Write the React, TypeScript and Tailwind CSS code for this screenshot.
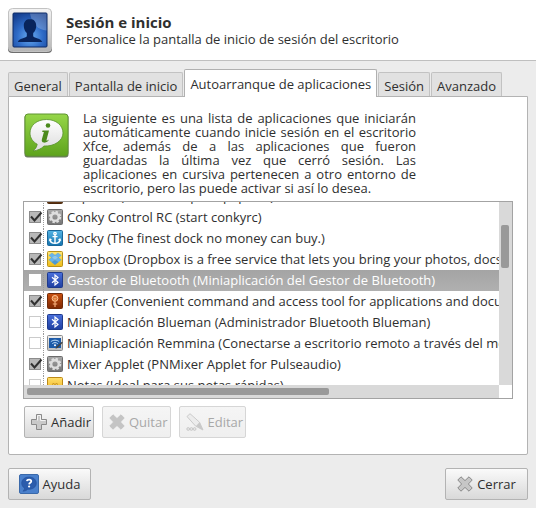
import {useState, type ReactNode} from "react";

type AppEntry = {
    name: string;
    icon: ReactNode;
    enabled: boolean;
};

type TileProps = {
    top: string;
    bottom: string;
    edge: string;
    children: ReactNode;
};

function Tile({top, bottom, edge, children}: TileProps) {
    const id = `tile${top.slice(1)}`;
    return (
        <svg viewBox="0 0 16 16" className="size-4 shrink-0">
            <defs>
                <linearGradient id={id} x1="0" y1="0" x2="0" y2="1">
                    <stop offset="0" stopColor={top}/>
                    <stop offset="1" stopColor={bottom}/>
                </linearGradient>
            </defs>
            <rect x="0.5" y="0.5" width="15" height="15" rx="1" fill={`url(#${id})`} stroke={edge}/>
            {children}
        </svg>
    );
}

const gear = (
    <Tile top="#a9a9a9" bottom="#757575" edge="#6c6c6c">
        <circle cx="8" cy="8" r="5.2" fill="none" stroke="#dedede" strokeWidth="2" strokeDasharray="2.4 1.68"/>
        <circle cx="8" cy="8" r="3.8" fill="none" stroke="#dedede" strokeWidth="2.4"/>
    </Tile>
);

const anchor = (
    <Tile top="#55b4e4" bottom="#1573ae" edge="#1a6799">
        <g fill="none" stroke="#fff" strokeWidth="1.4">
            <circle cx="8" cy="3.6" r="1.2"/>
            <path d="M8 5v8M5.5 6.6h5M2.9 9.3c.3 2.5 2.4 4 5.1 4s4.8-1.5 5.1-4"/>
        </g>
        <path d="M1.8 11l1-3 2.4 2zM14.2 11l-1-3-2.4 2z" fill="#fff"/>
    </Tile>
);

const dropbox = (
    <Tile top="#ffe878" bottom="#eebc19" edge="#b99218">
        <path d="M5 2L8.200 4.400 5 6.800 1.800 4.400zM11 2l3.200 2.400L11 6.800 7.800 4.400zM5 6.400l3.200 2.400L5 11.200 1.800 8.800zM11 6.400l3.200 2.400-3.200 2.400-3.200-2.400z" fill="#67b4ec" stroke="#4d9cd8" strokeWidth=".4"/>
        <path d="M8 4.400l3 2.200-3 2.200-3-2.200z" fill="#8cc8f2"/>
        <path d="M4.600 11.300L8 9l3.400 2.300L8 13.900z" fill="#4a98d6"/>
    </Tile>
);

const bluetooth = (
    <Tile top="#4a70dc" bottom="#1f3fa0" edge="#1e3a8c">
        <path d="M5 5.3l6 5.2L8 13V3l3 2.5-6 5.2" fill="none" stroke="#fff" strokeWidth="1.2"/>
    </Tile>
);

const kupfer = (
    <Tile top="#c9500f" bottom="#7e2803" edge="#6f2a09">
        <circle cx="8" cy="5.4" r="2.9" fill="#d8702c" stroke="#ffc595" strokeWidth="1"/>
        <path d="M8 8.4V14M5.8 11h4.4" stroke="#f5ad78" strokeWidth="1.2"/>
        <path d="M6.5 4.8L8 6.4l1.5-1.6" fill="none" stroke="#ffc595" strokeWidth=".8"/>
    </Tile>
);

const remmina = (
    <Tile top="#f0f0f0" bottom="#bdbdbd" edge="#8a8a8a">
        <path d="M2 3h12v10H2z" fill="#1c5aa8"/>
        <path d="M3.8 6.7c2.4-2 6-2 8.4 0M5.3 8.6c1.6-1.3 3.8-1.3 5.4 0" fill="none" stroke="#c4dffa" strokeWidth="1"/>
        <circle cx="8" cy="10.3" r="1" fill="#fff"/>
        <path d="M16 7.5L10.5 13l-2 .8.8-2L14.5 7z" fill="#444"/>
    </Tile>
);

const notes = (
    <Tile top="#ffdf6b" bottom="#eeb01c" edge="#bd8a17">
        <path d="M5 7.5l1.5-1L8 7.500l1.5-1 1.5 1" fill="none" stroke="#b27d14" strokeWidth=".8"/>
    </Tile>
);

const clipman = (
    <Tile top="#a0672f" bottom="#5a300e" edge="#4c2a0f">
        <path d="M4 3h8v9H4z" fill="#f2f2f2"/>
    </Tile>
);

const entries: AppEntry[] = [
    {name: "Clipman (Gestor del portapapeles)", icon: clipman, enabled: false},
    {name: "Conky Control RC (start conkyrc)", icon: gear, enabled: true},
    {name: "Docky (The finest dock no money can buy.)", icon: anchor, enabled: true},
    {name: "Dropbox (Dropbox is a free service that lets you bring your photos, docs, and videos anywhere)", icon: dropbox, enabled: true},
    {name: "Gestor de Bluetooth (Miniaplicación del Gestor de Bluetooth)", icon: bluetooth, enabled: false},
    {name: "Kupfer (Convenient command and access tool for applications and documents)", icon: kupfer, enabled: true},
    {name: "Miniaplicación Blueman (Administrador Bluetooth Blueman)", icon: bluetooth, enabled: false},
    {name: "Miniaplicación Remmina (Conectarse a escritorio remoto a través del menú)", icon: remmina, enabled: false},
    {name: "Mixer Applet (PNMixer Applet for Pulseaudio)", icon: gear, enabled: true},
    {name: "Notas (Ideal para sus notas rápidas)", icon: notes, enabled: false},
];

const tabs = ["General", "Pantalla de inicio", "Autoarranque de aplicaciones", "Sesión", "Avanzado"];

function SessionIcon() {
    return (
        <svg viewBox="0 0 44 45" className="h-[45px] w-11 shrink-0">
            <defs>
                <linearGradient id="frame" x1="0" y1="0" x2="0" y2="1">
                    <stop offset="0" stopColor="#f4f4f4"/>
                    <stop offset="1" stopColor="#b5b5b5"/>
                </linearGradient>
                <radialGradient id="screen" cx=".5" cy=".7" r=".75">
                    <stop offset="0" stopColor="#6aaef2"/>
                    <stop offset=".5" stopColor="#2f6cc8"/>
                    <stop offset="1" stopColor="#153f90"/>
                </radialGradient>
            </defs>
            <rect x="0" y="2" width="44" height="43" rx="4" fill="#6f6f6f"/>
            <rect x=".5" y=".5" width="43" height="43" rx="4" fill="url(#frame)" stroke="#c2c2c2"/>
            <rect x="5" y="5" width="34" height="34" rx="1" fill="url(#screen)" stroke="#0d2a66"/>
            <path d="M22 5.5h16.5v17C30 22 24 16 22 5.5z" fill="#fff" opacity=".22"/>
            <path d="M22 11c-4 0-6.2 2.8-6.2 6.8 0 3.4 1.3 5.6 3 7.2v3.2c-1.3 2.2-7.8 2-9 5.8h24.4c-1.2-3.8-7.7-3.6-9-5.8V25c1.7-1.6 3-3.8 3-7.2 0-4-2.2-6.8-6.2-6.8z" fill="#08245c"/>
        </svg>
    );
}

function InfoIcon() {
    return (
        <svg viewBox="0 0 45 45" className="mt-0.5 size-[45px] shrink-0">
            <defs>
                <linearGradient id="green" x1="0" y1="0" x2="0" y2="1">
                    <stop offset="0" stopColor="#96d649"/>
                    <stop offset="1" stopColor="#5da31c"/>
                </linearGradient>
                <linearGradient id="bubble" x1="0" y1="0" x2="0" y2="1">
                    <stop offset="0" stopColor="#fff"/>
                    <stop offset="1" stopColor="#dcdcdc"/>
                </linearGradient>
            </defs>
            <rect x=".5" y="1.5" width="44" height="43" rx="3" fill="#6d7a62"/>
            <rect x="1" y="1" width="43" height="42" rx="3" fill="url(#green)" stroke="#5f9430"/>
            <path d="M22.5 6.5c-9.5 0-16.5 5.8-16.5 13.5 0 4.8 2.8 8.9 7.2 11.2-.4 2.7-1.8 4.9-4.2 6.8 4.6-.5 8.4-2.2 11-5 9.8.6 19-5 19-13 0-7.7-7-13.500-16.500-13.500z" fill="url(#bubble)" stroke="#57922a" strokeWidth=".8"/>
            <circle cx="24" cy="12.5" r="2.3" fill="#4b8a1c"/>
            <path d="M18.5 17.5h6.5l-2.5 9.5c-.2 1 .8.9 2.5-.4-.8 2.2-2.8 3.2-5 3-2-.2-2.6-1.5-2.1-3.3l2-7.3h-1.7z" fill="#4b8a1c"/>
        </svg>
    );
}

function AddIcon() {
    return (
        <svg viewBox="0 0 16 16" className="size-4">
            <path d="M5.5.5h5v5h5v5h-5v5h-5v-5h-5v-5h5z" fill="#c9c9c9" stroke="#8a8a8a"/>
            <path d="M6.5 6.5v-5h3v5h5" fill="none" stroke="#f3f3f3"/>
        </svg>
    );
}

function CrossIcon({fill, stroke}: {fill: string; stroke: string}) {
    return (
        <svg viewBox="0 0 16 16" className="size-4">
            <path d="M4 .8L8 4.600 12 .8 15.200 4 11.400 8l3.800 4-3.200 3.200-4-3.800-4 3.800L.8 12l3.800-4L.8 4z" fill={fill} stroke={stroke} strokeLinejoin="round"/>
        </svg>
    );
}

function EditIcon() {
    return (
        <svg viewBox="0 0 18 18" className="size-[18px]">
            <path d="M1 3.500L4 .7l9.500 8.500L17 17l-7.500-4z" fill="#ececec" stroke="#cacaca"/>
            <path d="M13.500 9.200L10 13l7 4z" fill="#c8c8c8"/>
            <g fill="#e6e6e6" stroke="#c2c2c2" strokeWidth=".8">
                <circle cx="2.2" cy="16" r="1.4"/>
                <circle cx="5.4" cy="16" r="1.4"/>
                <circle cx="8.6" cy="16" r="1.4"/>
            </g>
        </svg>
    );
}

function HelpIcon() {
    return (
        <svg viewBox="0 0 20 20" className="size-5">
            <rect x=".5" y=".5" width="19" height="19" rx="1.5" fill="#4a80cc" stroke="#3a69aa"/>
            <path d="M10 3c-4.300 0-7.300 2.700-7.300 6.200 0 2.100 1.100 3.900 2.900 5-.1 1.300-.7 2.200-1.700 3 2 0 3.700-.8 4.800-2 5 .5 8.600-2.300 8.600-6C17.300 5.700 14.300 3 10 3z" fill="#2b5cac" stroke="#234f98" strokeWidth=".6"/>
            <path d="M7.800 7.200c.3-2.200 4.500-2.100 4.500.1 0 1.500-2.100 1.500-2.200 3.100" fill="none" stroke="#fff" strokeWidth="1.7"/>
            <circle cx="10.1" cy="12.5" r="1.1" fill="#fff"/>
        </svg>
    );
}

function Button({icon, disabled, children}: {icon: ReactNode; disabled?: boolean; children: ReactNode}) {
    return (
        <button
            type="button"
            disabled={disabled}
            className="flex h-8 items-center justify-center gap-1 rounded-xs border border-[#b3b3b3] bg-linear-to-b from-[#fafafa] to-[#d9d9d9] disabled:border-[#d6d6d6] disabled:from-[#f5f5f5] disabled:to-[#efefef] disabled:text-[#a8a8a8]"
        >
            {icon}
            {children}
        </button>
    );
}

export default function App() {
    const [items, setItems] = useState(entries);
    const [selected, setSelected] = useState(4);

    const toggle = (idx: number) => {
        setItems(items.map((item, i) => (i === idx ? {...item, enabled: !item.enabled} : item)));
        setSelected(idx);
    };

    return (
        <div className="min-h-screen bg-[#ececec] font-['Open_Sans',sans-serif] text-[13px] leading-4 text-[#2f2f2f]">
            <header className="flex gap-3.5 border-b border-[#bfbfbf] bg-white px-2 pt-2 pb-[7px]">
                <SessionIcon/>
                <div className="pt-[5px]">
                    <h1 className="text-[15px] leading-[18px] font-bold">Sesión e inicio</h1>
                    <p>Personalice la pantalla de inicio de sesión del escritorio</p>
                </div>
            </header>

            <main className="px-2 pt-2">
                <div role="tablist" className="flex items-end gap-px">
                    {tabs.map((tab) => (
                        <button
                            key={tab}
                            type="button"
                            role="tab"
                            aria-selected={tab === tabs[2]}
                            className="h-6 rounded-t-xs border border-b-0 border-[#c2c2c2] bg-[#e1e1e1] px-[5px] pt-0.5 whitespace-nowrap aria-selected:z-10 aria-selected:-mb-px aria-selected:h-7 aria-selected:border-[#b0b0b0] aria-selected:bg-white aria-selected:pt-0"
                        >
                            {tab}
                        </button>
                    ))}
                </div>

                <section className="rounded-b-xs border border-[#b3b3b3] bg-white px-3.5 pt-3.5 pb-4">
                    <div className="flex gap-3.5 pl-px">
                        <InfoIcon/>
                        <p className="w-[333px] text-justify leading-[14px]">
                            La siguiente es una lista de aplicaciones que iniciarán automáticamente cuando inicie
                            sesión en el escritorio Xfce, además de a las aplicaciones que fueron guardadas la última
                            vez que cerró sesión. Las aplicaciones en cursiva pertenecen a otro entorno de
                            escritorio, pero las puede activar si así lo desea.
                        </p>
                    </div>

                    <div className="mt-1.5 grid grid-cols-[minmax(0,1fr)_13px] grid-rows-[183px_13px] border border-[#a3a3a3]">
                        <ul className="overflow-hidden">
                            {items.map((item, idx) => (
                                <li
                                    key={item.name}
                                    className={`h-[21px] first:-mt-4 ${idx === selected ? "bg-linear-to-b from-[#a4a4a4] to-[#b0b0b0] text-white" : ""}`}
                                >
                                    <label className="flex h-full items-center pb-px pl-[5px] whitespace-nowrap">
                                        <span className="relative size-3 shrink-0">
                                            <input
                                                type="checkbox"
                                                checked={item.enabled}
                                                onChange={() => toggle(idx)}
                                                className={`peer block size-3 appearance-none border bg-white checked:border-[#8c8c8c] checked:bg-[#b8b8b8] ${idx === selected ? "border-white" : "border-[#cbcbcb]"}`}
                                            />
                                            <svg viewBox="0 0 14 12" className="pointer-events-none absolute top-0 left-0 hidden h-3 w-3.5 peer-checked:block">
                                                <path d="M2 5.5l3.5 4L12.5 1.5" fill="none" stroke="#303030" strokeWidth="2"/>
                                            </svg>
                                        </span>
                                        <span className="mr-[3px] ml-0.5 h-full border-l border-dotted border-[#9a9a9a]"></span>
                                        {item.icon}
                                        <span className="pl-1">{item.name}</span>
                                    </label>
                                </li>
                            ))}
                        </ul>
                        <div className="bg-[#d9d9d9] px-0.5 pt-[23px]">
                            <div className="h-[43px] w-2 rounded-xs bg-[#999]"></div>
                        </div>
                        <div className="bg-[#d9d9d9] py-[3px] pl-[3px]">
                            <div className="h-[7px] w-16/25 rounded-xs bg-[#999]"></div>
                        </div>
                    </div>

                    <div className="mt-[7px] flex gap-2 pl-px *:pr-0.5 *:pl-1.5">
                        <Button icon={<AddIcon/>}>Añadir</Button>
                        <Button disabled icon={<CrossIcon fill="#c4c4c4" stroke="#c4c4c4"/>}>Quitar</Button>
                        <Button disabled icon={<EditIcon/>}>Editar</Button>
                    </div>
                </section>
            </main>

            <footer className="flex justify-between px-2 pt-[13px] pb-2 *:min-w-[83px]">
                <Button icon={<HelpIcon/>}>Ayuda</Button>
                <Button icon={<CrossIcon fill="#c6c6c6" stroke="#898989"/>}>Cerrar</Button>
            </footer>
        </div>
    );
}
